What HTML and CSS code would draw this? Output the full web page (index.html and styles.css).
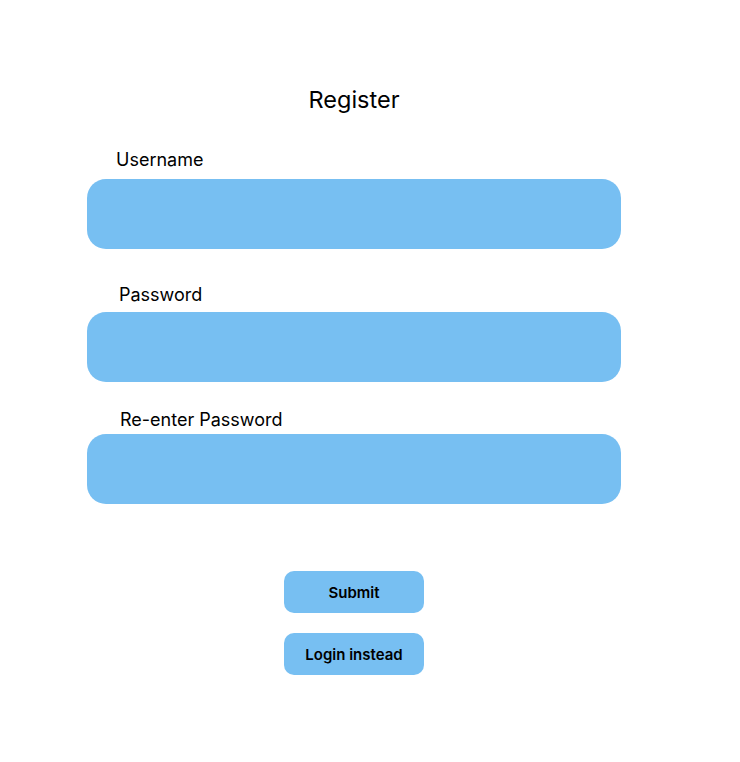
FILE: index.html
```html
<!DOCTYPE html>
<html lang="en">
<head>
<meta charset="utf-8">
<title>Register</title>
<link rel="stylesheet" href="styles.css">
</head>
<body>
<main class="register">
  <h1 class="register__title">Register</h1>
  <form class="register__form">
    <div class="field field--username">
      <label class="field__label" for="username">Username</label>
      <input class="field__input" id="username" type="text">
    </div>
    <div class="field field--password">
      <label class="field__label" for="password">Password</label>
      <input class="field__input" id="password" type="password">
    </div>
    <div class="field field--repeat">
      <label class="field__label" for="password2">Re-enter Password</label>
      <input class="field__input" id="password2" type="password">
    </div>
    <div class="actions">
      <button class="btn" type="button">Submit</button>
      <button class="btn" type="button">Login instead</button>
    </div>
  </form>
</main>
</body>
</html>
```
FILE: styles.css
```css
html, body {
  margin: 0;
  padding: 0;
  background: #ffffff;
}

body {
  font-family: Inter, "Noto Sans", sans-serif;
  color: #000000;
}

.register {
  width: 534px;
  margin-left: 87px;
  padding-top: 85px;
}

.register__title {
  margin: 0;
  font-size: 23.5px;
  line-height: 30px;
  font-weight: 400;
  text-align: center;
}

.register__form {
  display: flex;
  flex-direction: column;
}

.field {
  display: flex;
  flex-direction: column;
}

.field__label {
  display: block;
  font-size: 18px;
  line-height: 22px;
}

.field__input {
  display: block;
  box-sizing: border-box;
  width: 534px;
  height: 70px;
  border: none;
  outline: none;
  border-radius: 19px;
  background: #77bff2;
  padding: 0 20px;
  font: inherit;
}

.field--username {
  margin-top: 34px;
}
.field--username .field__label {
  padding-left: 29px;
  margin-bottom: 8px;
}

.field--password {
  margin-top: 35px;
}
.field--password .field__label {
  padding-left: 32px;
  margin-bottom: 6px;
}

.field--repeat {
  margin-top: 27px;
}
.field--repeat .field__label {
  padding-left: 33px;
  margin-bottom: 3px;
}

.actions {
  display: flex;
  flex-direction: column;
  align-items: center;
  gap: 20px;
  margin-top: 67px;
}

.btn {
  width: 140px;
  height: 42px;
  border: none;
  border-radius: 10px;
  background: #77bff2;
  color: #000000;
  font-family: Inter, "Noto Sans", sans-serif;
  font-size: 15px;
  font-weight: 600;
  cursor: pointer;
  padding: 0;
}
```
